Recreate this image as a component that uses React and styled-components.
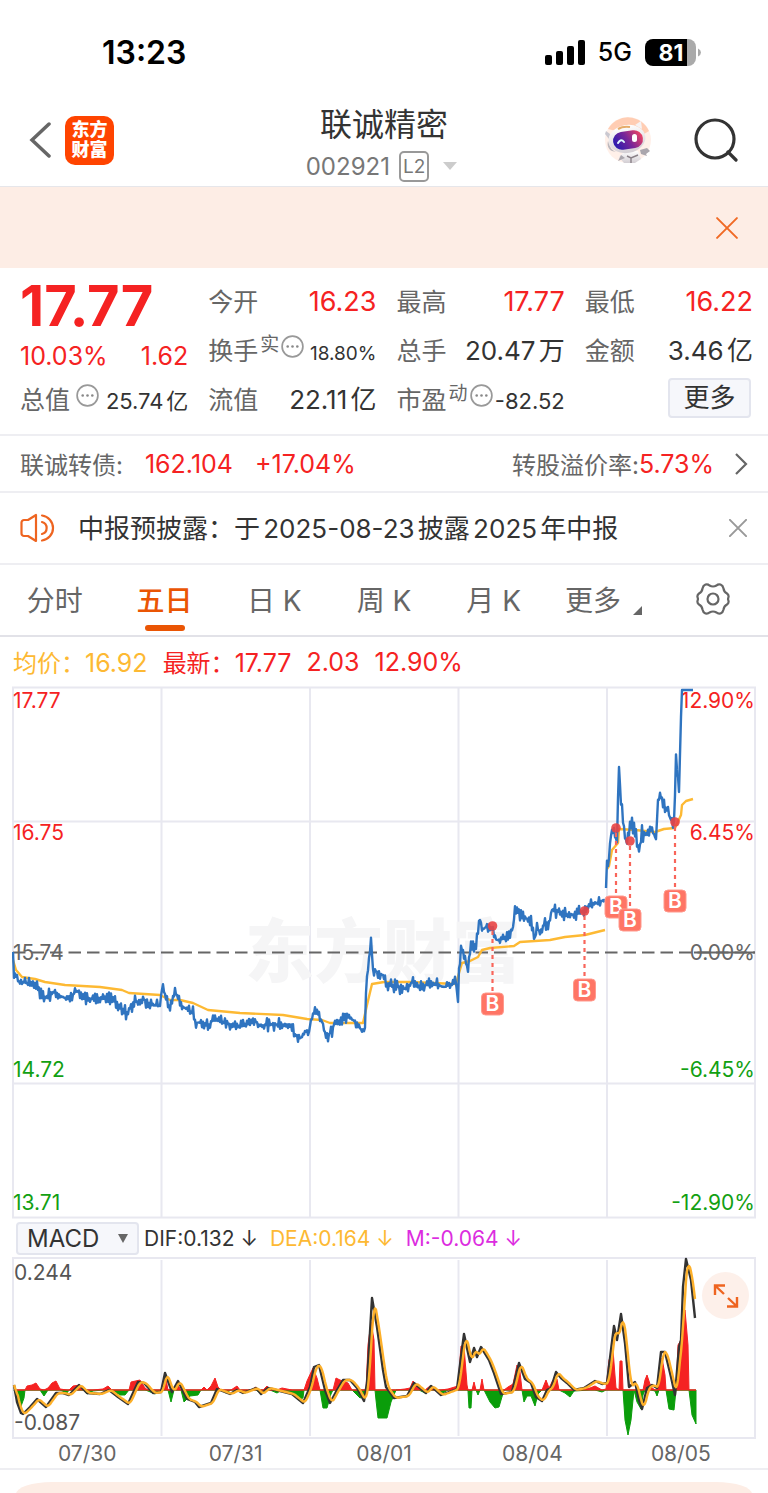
import React from 'react';
import styled, { createGlobalStyle } from 'styled-components'

const GlobalStyle = createGlobalStyle`
* { box-sizing: border-box; }
body {
margin: 0;
background: #fff;
color: #333;
font-family: Inter, "Noto Sans CJK SC", sans-serif;
text-autospace: normal;
}
button, select {
font: inherit;
color: inherit;
margin: 0;
padding: 0;
border: 0;
background: none;
}
h1, p, dl, dt, dd { margin: 0; font-weight: 400; }
svg { display: block; flex-shrink: 0; }
`

const Page = styled.main`
overflow: hidden;
`

const StatusBar = styled.div`
display: flex;
align-items: center;
justify-content: space-between;
height: 104px;
padding: 0 67px 0 102px;
color: #000;
`
const Clock = styled.span`
font-size: 32px;
font-weight: 600;
`
const StatusIcons = styled.div`
display: flex;
align-items: center;
gap: 13px;
font-size: 25px;
font-weight: 500;
`

const Header = styled.header`
display: grid;
grid-template-columns: 1fr auto 1fr;
height: 83px;
border-bottom: 1px solid #e6e6ea;
`
const HeaderSide = styled.div`
display: flex;
align-items: center;
justify-content: ${props => props.$end ? 'flex-end' : 'flex-start'};
gap: ${props => props.$end ? '42px' : '14px'};
padding: 0 30px 10px 29px;
`
const Logo = styled.a`
display: flex;
flex-direction: column;
justify-content: center;
width: 49px;
height: 49px;
border-radius: 10px;
background: #ff4400;
color: #fff;
font-size: 18px;
font-weight: 900;
line-height: 20px;
text-align: center;
text-decoration: none;
`
const Title = styled.h1`
font-size: 32px;
line-height: 42px;
text-align: center;
`
const Code = styled.button`
display: flex;
align-items: center;
justify-content: center;
gap: 9px;
width: 100%;
height: 40px;
color: #777;
font-size: 24px;
`
const Level = styled.span`
padding: 0 2px;
border: 2px solid #999;
border-radius: 5px;
font-size: 19px;
line-height: 27px;
`

const Banner = styled.div`
display: flex;
align-items: center;
justify-content: flex-end;
height: 81px;
padding: 0 30px;
background: #fdede5;
`

const Quote = styled.section`
display: grid;
grid-template-columns: repeat(4, 1fr);
column-gap: 20px;
padding: 10px 15px 9px 20px;
border-bottom: 2px solid #eeeef2;
`
const Column = styled.div`
display: flex;
flex-direction: column;
`
const Price = styled.p`
color: #f52222;
font-size: 56px;
font-weight: 700;
line-height: 56px;
`
const Change = styled.p`
display: flex;
align-items: center;
justify-content: space-between;
height: 44px;
margin-bottom: -2px;
color: #f52222;
font-size: 25px;
`
const Cell = styled.div`
display: flex;
align-items: baseline;
justify-content: space-between;
height: 49px;
line-height: 48px;
white-space: nowrap;
`
const Label = styled.dt`
display: flex;
color: #666;
font-size: 25px;
`
const Sup = styled.sup`
margin-left: 2px;
font-size: 19px;
line-height: 36px;
vertical-align: baseline;
`
const Dots = styled.svg`
margin: 8px 0 0 ${props => props.$gap}px;
`
const Value = styled.dd`
color: ${props => props.$up ? '#f52222' : '#333'};
font-size: ${props => props.$size || 26}px;
`
const MoreButton = styled.button`
align-self: flex-end;
width: 83px;
height: 40px;
margin: 2px 2px 0 0;
border: 2px solid #e3e5ee;
border-radius: 4px;
background: #f6f7fb;
font-size: 26px;
line-height: 36px;
`

const Bond = styled.a`
display: flex;
align-items: center;
height: 57px;
padding: 0 20px;
border-bottom: 2px solid #eeeef2;
color: #666;
font-size: 24px;
text-decoration: none;
white-space: nowrap;
`
const Red = styled.span`
color: #f52222;
font-size: 25px;
margin-left: ${props => props.$gap || 0}px;
`
const Premium = styled.span`
display: flex;
align-items: center;
margin-left: auto;
svg { margin-left: 20px; }
`

const Notice = styled.section`
display: flex;
align-items: center;
height: 72px;
padding: 0 21px 0 20px;
border-bottom: 2px solid #eeeef2;
`
const NoticeText = styled.p`
flex: 1;
margin-left: 22px;
padding-bottom: 4px;
font-size: 26px;
white-space: nowrap;
`

const Tabs = styled.nav`
display: grid;
grid-template-columns: repeat(7, 1fr);
height: 72px;
border-bottom: 2px solid #e2e2e8;
`
const Tab = styled.button`
position: relative;
display: flex;
align-items: center;
justify-content: center;
padding-bottom: 2px;
color: ${props => props.$active ? '#ea5504' : '#666'};
font-size: 28px;
font-weight: ${props => props.$active ? 500 : 400};
white-space: nowrap;
`
const Underline = styled.span`
position: absolute;
bottom: 4px;
left: 50%;
width: 40px;
height: 6px;
margin-left: -20px;
border-radius: 3px;
background: #ea5504;
`
const Corner = styled.span`
align-self: flex-end;
margin: 0 0 18px 12px;
border-left: 9px solid transparent;
border-bottom: 9px solid #666;
`

const Legend = styled.div`
display: flex;
align-items: center;
gap: 15px;
height: 49px;
padding: 0 13px;
color: #f52222;
font-size: 25px;
white-space: nowrap;
`
const Average = styled.span`
color: #fdb933;
`
const Name = styled.span`
font-size: 24px;
`

const Plot = styled.div`
position: relative;
padding: 0 12px;
svg { width: 100%; height: auto; }
`
const Indicator = styled.div`
display: flex;
align-items: center;
gap: 12px;
height: 38px;
padding: 0 16px;
font-size: 21px;
white-space: nowrap;
`
const SelectBox = styled.label`
position: relative;
width: 123px;
margin-right: -7px;
svg { position: absolute; right: 11px; top: 11px; pointer-events: none; }
`
const Select = styled.select`
appearance: none;
width: 100%;
height: 33px;
padding: 0 9px;
border: 2px solid #e3e5ee;
border-radius: 4px;
background: #f6f7fb;
font-size: 24px;
`
const Reading = styled.span`
color: ${props => props.color};
`
const Expand = styled.button`
position: absolute;
top: 15px;
right: 19px;
display: flex;
align-items: center;
justify-content: center;
width: 47px;
height: 47px;
border-radius: 50%;
background: #fdf0ea;
svg { width: 26px; height: 26px; }
`
const Dates = styled.div`
display: grid;
grid-template-columns: repeat(5, 1fr);
padding: 0 13px;
border-bottom: 2px solid #eeeef2;
color: #666;
font-size: 21px;
line-height: 29px;
text-align: center;
`
const Sheet = styled.div`
height: 12px;
margin: 12px 16px 0;
border-radius: 36px 36px 0 0 / 12px 12px 0 0;
background: #fdede5;
`

// [x, y] pairs along the price line, one list per unbroken run
const price = [
  [13,952],[14,972],[17,976],[19,984],[23,982],[32,985],[38,987],[43,998],[48,996],[55,992],[62,997],[68,999],[77,991],[83,997],
  [97,1000],[108,998],[115,1002],[122,1008],[127,1014],[133,1003],[143,999],[152,1005],[160,1006],[162,988],[167,998],[170,1009],
  [173,996],[176,993],[182,1006],[193,1013],[195,1023],[202,1022],[208,1027],[214,1016],[220,1022],[230,1024],[240,1026],[255,1021],
  [260,1026],[273,1024],[293,1027],[295,1035],[301,1038],[305,1031],[309,1032],[312,1014],[317,1012],[322,1022],[326,1037],[332,1031],
  [335,1021],[340,1021],[347,1017],[355,1021],[362,1031],[365,1028],[366,990],[368,968],[371,938],[373,970],[383,975],[386,984],
  [392,985],[406,989],[412,982],[422,987],[431,983],[444,987],[456,983],[458,1002],[459,973],[461,947],[466,963],[468,970],[471,944],
  [476,946],[480,920],[482,930],[487,926],[492,928],[497,940],[509,938],[513,928],[515,908],[521,917],[531,920],[535,938],[537,927],
  [541,936],[544,925],[549,922],[552,910],[561,912],[569,915],[577,914],[584,910],[592,904],[599,903],[605,899]
]
const priceLast = [
  [606,888],[607,853],[608,866],[611,834],[614,832],[617,842],[619,767],[621,803],[624,830],[626,845],[632,820],[636,838],[639,850],
  [642,834],[647,835],[651,825],[656,840],[658,800],[660,796],[666,808],[671,820],[674,824],[676,758],[678,777]
]
// limit-up stretch, without swings
const limitUp = [[678,777],[679,792],[681,717],[682,690],[693,690]]
const average = [
  [13,960],[16,970],[22,977],[35,979],[45,982],[65,985],[100,987],[122,990],[129,993],[160,995],[170,1000],[180,1000],[193,1003],
  [208,1010],[240,1013],[283,1015],[307,1019],[322,1020],[330,1023],[363,1023],[367,1005],[372,984],[384,982],[410,982],[456,984],
  [459,973],[462,963],[470,961],[478,957],[482,950],[490,948],[514,946],[520,942],[550,940],[565,937],[585,935],[605,930]
]
const averageLast = [
  [607,869],[609,866],[612,850],[618,843],[619,829],[635,830],[655,832],[664,829],[675,828],[681,815],[682,805],[686,801],[693,799]
]
const buys = [[492.5,926,1004],[584.5,911,990],[616,828,907],[630,841,920],[675,822,901]]

const dif = [
  [14,1385],[17,1402],[21,1413],[23,1414],[30,1407],[37,1399],[46,1407],[56,1393],[63,1393],[69,1395],[79,1385],[87,1393],[100,1394],
  [109,1390],[118,1397],[128,1404],[138,1382],[144,1383],[153,1393],[161,1392],[165,1373],[172,1392],[178,1381],[187,1399],[195,1402],
  [199,1407],[211,1403],[217,1389],[230,1394],[237,1390],[243,1393],[256,1388],[261,1394],[268,1388],[292,1394],[303,1403],[310,1387],
  [314,1367],[319,1365],[325,1390],[330,1403],[337,1390],[343,1380],[350,1380],[357,1388],[364,1401],[367,1383],[372,1298],[377,1327],
  [383,1370],[386,1387],[394,1398],[407,1396],[414,1383],[426,1393],[431,1386],[441,1395],[457,1389],[461,1357],[464,1334],[470,1362],
  [474,1348],[477,1357],[481,1347],[489,1360],[494,1373],[501,1394],[512,1392],[519,1363],[525,1379],[531,1383],[536,1397],[542,1401],
  [547,1390],[551,1388],[556,1372],[561,1378],[567,1383],[574,1390],[584,1388],[595,1381],[602,1384],[607,1383],[611,1350],[614,1326],
  [617,1340],[621,1314],[625,1343],[629,1387],[635,1382],[639,1400],[642,1409],[647,1388],[652,1385],[657,1388],[661,1352],[665,1352],
  [671,1377],[675,1395],[679,1347],[681,1340],[683,1287],[686,1259],[691,1280],[695,1318]
]
const histogram = [
  [14,1390],[17,1398],[20,1409],[24,1398],[25,1390],[27,1386],[32,1385],[36,1383],[40,1389],[44,1396],[48,1388],[52,1383],[56,1381],
  [60,1389],[67,1393],[69,1390],[73,1386],[80,1385],[83,1390],[87,1394],[93,1391],[103,1389],[108,1386],[112,1390],[120,1395],[125,1395],
  [129,1390],[131,1382],[140,1380],[145,1388],[148,1391],[155,1394],[161,1390],[165,1374],[168,1390],[171,1402],[174,1390],[177,1384],
  [181,1390],[184,1402],[190,1396],[198,1395],[201,1390],[204,1387],[207,1390],[211,1386],[215,1378],[218,1387],[221,1390],[226,1393],
  [231,1390],[237,1386],[240,1390],[245,1393],[251,1390],[256,1387],[259,1392],[263,1391],[267,1386],[270,1390],[277,1393],[282,1388],
  [292,1393],[298,1400],[303,1398],[304,1390],[307,1381],[313,1368],[317,1378],[320,1390],[323,1408],[327,1408],[331,1394],[333,1390],
  [336,1378],[340,1380],[348,1383],[352,1390],[360,1398],[365,1396],[366,1390],[368,1345],[371,1322],[374,1340],[375,1390],[376,1400],
  [378,1418],[387,1418],[391,1402],[396,1390],[405,1389],[410,1388],[413,1381],[419,1388],[425,1393],[430,1386],[436,1390],[441,1394],
  [448,1389],[458,1386],[461,1346],[464,1346],[467,1385],[468,1391],[469,1408],[471,1408],[472,1390],[474,1382],[476,1390],[478,1395],
  [480,1390],[482,1379],[484,1390],[490,1402],[495,1408],[499,1407],[504,1390],[508,1387],[513,1384],[517,1365],[520,1372],[522,1390],
  [524,1402],[527,1396],[531,1396],[535,1406],[538,1394],[542,1390],[546,1380],[549,1388],[553,1380],[557,1379],[559,1390],[565,1393],
  [570,1397],[574,1391],[590,1388],[595,1386],[602,1392],[606,1389],[609,1360],[613,1350],[616,1388],[619,1390],[620,1361],[622,1361],
  [623,1390],[625,1420],[628,1435],[631,1420],[634,1390],[637,1402],[641,1409],[643,1395],[645,1380],[647,1375],[651,1387],[655,1391],
  [657,1396],[659,1385],[662,1358],[665,1375],[666,1390],[669,1409],[674,1410],[676,1390],[678,1345],[681,1340],[685,1310],[688,1345],
  [689,1390],[692,1415],[696,1424]
]

const BASE = 1390

const join = (points) => points.map(p => p.join(',')).join(' ')

// one point per pixel between the given ones
const fill = (points) => {
  const out = []
  points.forEach(([x, y], i) => {
    out.push([x, y])
    const next = points[i + 1]
    if (!next) return
    for (let n = x + 1; n < next[0]; n++) {
      out.push([n, y + (next[1] - y) * (n - x) / (next[0] - x)])
    }
  })
  return out
}

// minute ticks: mostly small swings round the trend, now and then a spike
const ticks = (points, size) => fill(points).map(([x, y], i, all) => {
  const swing = Math.abs(Math.sin(i * 12.9898) * 43758.5453) % 1
  const side = i % 2 ? 1 : -1
  const edge = i === 0 || i === all.length - 1
  return [x, (y + (edge ? 0 : side * swing * swing * size)).toFixed(1)]
})

const trailing = (points, span) => {
  const all = fill(points)
  return all.map(([x], i) => {
    const part = all.slice(Math.max(0, i - span + 1), i + 1)
    return [x, (part.reduce((sum, p) => sum + p[1], 0) / part.length).toFixed(1)]
  })
}

const area = (points, clip) => join([[14, BASE], ...points.map(([x, y]) => [x, clip(y, BASE)]), [696, BASE]])

const scale = [
  ['17.77', '12.90%', 708, '#f52222'],
  ['16.75', '6.45%', 840, '#f52222'],
  ['15.74', '0.00%', 960, '#666'],
  ['14.72', '-6.45%', 1077, '#12a012'],
  ['13.71', '-12.90%', 1210, '#12a012']
]
const dayLines = [161.5, 310, 458.5, 607]

const Cross = ({ size, color, width }) => (
  <svg width={size} height={size} viewBox="0 0 20 20" fill="none" stroke={color} strokeWidth={width} strokeLinecap="round">
    <path d="M1 1l18 18M19 1L1 19" />
  </svg>
)

const Info = ({ gap }) => (
  <Dots $gap={gap} width="23" height="23" viewBox="0 0 23 23">
    <circle cx="11.5" cy="11.5" r="10.4" fill="none" stroke="#999" strokeWidth="1.7" />
    <g fill="#888">
      <circle cx="6.7" cy="11.5" r="1.3" />
      <circle cx="11.5" cy="11.5" r="1.3" />
      <circle cx="16.3" cy="11.5" r="1.3" />
    </g>
  </Dots>
)

const Robot = () => (
  <svg width="48" height="48" viewBox="0 0 48 48">
    <defs>
      <linearGradient id="visor" x1="0" x2="1" y1="0.6" y2="0.3">
        <stop offset="0" stopColor="#2a1bb0" />
        <stop offset="0.5" stopColor="#7a2598" />
        <stop offset="1" stopColor="#f04462" />
      </linearGradient>
      <linearGradient id="shell" x1="0" x2="0" y1="0" y2="1">
        <stop offset="0" stopColor="#ffffff" />
        <stop offset="1" stopColor="#d3ced3" />
      </linearGradient>
    </defs>
    <circle cx="24" cy="24" r="23" fill="#fff0e9" />
    <path d="M4 13A23 23 0 0 1 45 15L40 18L8 14z" fill="#ffcdb3" />
    <path d="M31 9l6-4 1 8z" fill="#f6f3f4" />
    <path d="M2 15l4 3-1 5-4-5z" fill="#cac8d0" />
    <path d="M20 36l14-1 3 8-6 4-11 0-5-6z" fill="url(#shell)" />
    <path d="M17 39l-3 6 7-3zM36 34l7-2 3 3-4 3 1 2-6-2z" fill="#aaa6ad" />
    <path d="M23 40l4 2 7-3M27 42v5" fill="none" stroke="#898087" strokeWidth="1.4" />
    <ellipse cx="23" cy="23" rx="18.5" ry="14" transform="rotate(-10 23 23)" fill="url(#shell)" />
    <path d="M4 25c2 7 4 9 8 11l-4-1c-4-2-5-6-4-10z" fill="#bcb8bd" />
    <path d="M14 13q5-3 12-2" fill="none" stroke="#e5ab69" strokeWidth="2.2" />
    <rect x="9" y="15" width="30" height="18" rx="9" transform="rotate(-8 24 24)" fill="url(#visor)" />
    <path d="M14 27q3-5 6-1" fill="none" stroke="#dffaff" strokeWidth="2" strokeLinecap="round" />
    <rect x="28" y="18" width="5" height="8" rx="2.5" fill="#fff" />
  </svg>
)

const Battery = () => (
  <svg width="56" height="27" viewBox="0 0 56 27">
    <path d="M8 0h34v27H8a8 8 0 0 1-8-8V8a8 8 0 0 1 8-8z" fill="#000" />
    <path d="M42 0h1a8 8 0 0 1 8 8v11a8 8 0 0 1-8 8h-1z" fill="#aaa" />
    <path d="M53 9.500q3 1.500 3 4t-3 4z" fill="#aaa" />
    <text x="26" y="22" textAnchor="middle" fontSize="23" fontWeight="700" fill="#fff">81</text>
  </svg>
)

const PriceChart = () => (
  <svg viewBox="12 686 744 533" fontSize="21" role="img" aria-label="五日走势">
    <g fill="none" stroke="#e8e8f0" strokeWidth="2">
      <rect x="13" y="687.500" width="742" height="530" />
      {dayLines.map(x => <path key={x} d={`M${x} 688V1217`} />)}
      <path d="M13 821.500H755M13 1083.500H755" />
    </g>
    <text x="245" y="977" fontSize="69" fontWeight="900" fill="#f5f5f6">东方财富</text>
    <path d="M13 952.500H755" stroke="#666" strokeWidth="2.200" strokeDasharray="12.500 6" />
    {scale.map(([left, right, y, color]) => (
      <g key={left} fill={color}>
        <text x="13" y={y}>{left}</text>
        <text x="755" y={y} textAnchor="end">{right}</text>
      </g>
    ))}
    <path d="M694 952.500H755" stroke="#666" strokeWidth="2" />
    <g fill="none" strokeWidth="2.400" strokeLinejoin="round">
      <polyline points={join(average)} stroke="#fdb933" />
      <polyline points={join(averageLast)} stroke="#fdb933" />
      <polyline points={join(ticks(price, 7))} stroke="#2f74c0" />
      <polyline points={join(ticks(priceLast, 9))} stroke="#2f74c0" />
      <polyline points={join(limitUp)} stroke="#2f74c0" />
    </g>
    {buys.map(([x, dot, box]) => (
      <g key={x}>
        <path d={`M${x} ${dot + 5}V${box - 12}`} stroke="#f8655a" strokeWidth="2.200" strokeDasharray="4 4" />
        <circle cx={x} cy={dot} r="4.800" fill="#e94444" opacity="0.9" />
        <rect x={x - 11} y={box - 11} width="22" height="22" rx="4" fill="#ff7565" stroke="#ff9a8e" />
        <text x={x} y={box + 7} textAnchor="middle" fontSize="21" fontWeight="600" fill="#fff">B</text>
      </g>
    ))}
  </svg>
)

const MacdChart = () => (
  <svg viewBox="12 1257 744 182" fontSize="21" role="img" aria-label="MACD">
    <g fill="none" stroke="#e8e8f0" strokeWidth="2">
      <rect x="13" y="1258" width="742" height="180" />
      {dayLines.map(x => <path key={x} d={`M${x} 1260V1436`} />)}
    </g>
    <polygon points={area(histogram, Math.max)} fill="#0a9d0a" stroke="#0a9d0a" />
    <polygon points={area(histogram, Math.min)} fill="#f52222" stroke="#f52222" />
    <g fill="none" strokeWidth="2.400" strokeLinejoin="round">
      <polyline points={join(dif)} stroke="#333" />
      <polyline points={join(trailing(dif, 5))} stroke="#fdb02a" />
    </g>
    <g fill="#555">
      <text x="14" y="1280">0.244</text>
      <text x="14" y="1430">-0.087</text>
    </g>
  </svg>
)

const columns = [
  [
    { label: '今开', value: '16.23', up: true, size: 27 },
    { label: '换手', sup: '实', info: true, value: '18.80%', size: 19 },
    { label: '流值', value: '22.11亿' }
  ],
  [
    { label: '最高', value: '17.77', up: true, size: 27 },
    { label: '总手', value: '20.47万' },
    { label: '市盈', sup: '动', info: true, value: '-82.52', size: 22 }
  ],
  [
    { label: '最低', value: '16.22', up: true, size: 27 },
    { label: '金额', value: '3.46亿' }
  ]
]
const tabs = ['分时', '五日', '日 K', '周 K', '月 K']

const QuoteCell = ({ item }) => (
  <Cell>
    <Label>
      {item.label}
      {item.sup && <Sup>{item.sup}</Sup>}
      {item.info && <Info gap={item.sup ? 2 : 6} />}
    </Label>
    <Value $up={item.up} $size={item.size}>{item.value}</Value>
  </Cell>
)

class App extends React.Component {

  state = { tab: '五日' }

  render() {

    const { tab } = this.state

    return (
      <Page>
        <GlobalStyle />
        <StatusBar>
          <Clock>13:23</Clock>
          <StatusIcons>
            <svg width="40" height="25" viewBox="0 0 40 25">
              <rect y="15" width="7" height="10" rx="2" />
              <rect x="11" y="11" width="7" height="14" rx="2" />
              <rect x="22" y="6" width="7" height="19" rx="2" />
              <rect x="33" width="7" height="25" rx="2" />
            </svg>
            5G
            <Battery />
          </StatusIcons>
        </StatusBar>

        <Header>
          <HeaderSide>
            <button aria-label="返回">
              <svg width="22" height="36" viewBox="0 0 22 36" fill="none" stroke="#666" strokeWidth="3.500" strokeLinecap="round">
                <path d="M20 2L3 18l17 16" />
              </svg>
            </button>
            <Logo href="#"><span>东方</span><span>财富</span></Logo>
          </HeaderSide>
          <div>
            <Title>联诚精密</Title>
            <Code>
              002921
              <Level>L2</Level>
              <svg width="24" height="8" viewBox="0 0 24 8"><path d="M5 0h14l-7 8z" fill="#ccc" /></svg>
            </Code>
          </div>
          <HeaderSide $end>
            <button aria-label="助手"><Robot /></button>
            <button aria-label="搜索">
              <svg width="44" height="44" viewBox="0 0 44 44" fill="none" stroke="#333" strokeWidth="3.200" strokeLinecap="round">
                <circle cx="21" cy="21" r="19" />
                <path d="M34 34l8 8" />
              </svg>
            </button>
          </HeaderSide>
        </Header>

        <Banner>
          <button aria-label="关闭横幅"><Cross size="22" color="#f06a25" width="1.800" /></button>
        </Banner>

        <Quote>
          <Column>
            <Price>17.77</Price>
            <Change><span>10.03%</span><span>1.62</span></Change>
            <dl><QuoteCell item={{ label: '总值', info: true, value: '25.74亿', size: 22 }} /></dl>
          </Column>
          {columns.map((items, i) => (
            <Column key={i}>
              <dl>{items.map(item => <QuoteCell key={item.label} item={item} />)}</dl>
              {i === 2 && <MoreButton>更多</MoreButton>}
            </Column>
          ))}
        </Quote>

        <Bond href="#">
          联诚转债:
          <Red $gap={22}>162.104</Red>
          <Red $gap={22}>+17.04%</Red>
          <Premium>
            转股溢价率:<Red>5.73%</Red>
            <svg width="14" height="22" viewBox="0 0 14 22" fill="none" stroke="#666" strokeWidth="2.200">
              <path d="M2 1l10 10L2 21" />
            </svg>
          </Premium>
        </Bond>

        <Notice>
          <svg width="36" height="30" viewBox="0 0 36 30" fill="none" stroke="#ee6420" strokeWidth="2.200" strokeLinecap="round" strokeLinejoin="round">
            <path d="M16 2v26l-8-5H4a2.500 2.500 0 0 1-2.500-2.500v-11A2.500 2.500 0 0 1 4 7h4z" />
            <path d="M22 2.500a12.600 12.600 0 0 1 0 25M22 9a6.200 6.200 0 0 1 0 12" />
          </svg>
          <NoticeText>中报预披露：于2025-08-23披露2025年中报</NoticeText>
          <button aria-label="关闭公告"><Cross size="18" color="#999" width="2.200" /></button>
        </Notice>

        <Tabs>
          {tabs.map(name => (
            <Tab key={name} $active={name === tab} onClick={() => this.setState({ tab: name })}>
              {name}
              {name === tab && <Underline />}
            </Tab>
          ))}
          <Tab>更多<Corner /></Tab>
          <Tab aria-label="设置">
            <svg width="34" height="32" viewBox="0 0 34 32" fill="none" stroke="#666" strokeWidth="2.200" strokeLinejoin="round">
              <path d="M9.500 1.500Q12 1 13.500 2.500Q17 4.500 20.500 2.500Q22 1 24.500 1.500Q27 2.500 27.500 5.500Q28 9 31 10.500Q33 12 32.500 14L32 16L32.500 18Q33 20 31 21.500Q28 23 27.500 26.500Q27 29.500 24.500 30.500Q22 31 20.500 29.500Q17 27.500 13.500 29.500Q12 31 9.500 30.500Q7 29.500 6.500 26.500Q6 23 3 21.500Q1 20 1.500 18L2 16L1.500 14Q1 12 3 10.500Q6 9 6.500 5.500Q7 2.500 9.500 1.500z" />
              <circle cx="17" cy="16" r="5.500" />
            </svg>
          </Tab>
        </Tabs>

        <Legend>
          <Average><Name>均价：</Name>16.92</Average>
          <span><Name>最新：</Name>17.77</span>
          <span>2.03</span>
          <span>12.90%</span>
        </Legend>
        <Plot><PriceChart /></Plot>
        <Indicator>
          <SelectBox>
            <Select aria-label="指标" defaultValue="MACD">
              <option>MACD</option>
              <option>KDJ</option>
              <option>RSI</option>
            </Select>
            <svg width="10" height="10" viewBox="0 0 10 10"><path d="M0 1h10L5 10z" fill="#666" /></svg>
          </SelectBox>
          <Reading color="#333">DIF:0.132 ↓</Reading>
          <Reading color="#fdb933">DEA:0.164 ↓</Reading>
          <Reading color="#dc2ce0">M:-0.064 ↓</Reading>
        </Indicator>
        <Plot>
          <MacdChart />
          <Expand aria-label="全屏">
            <svg viewBox="0 0 26 26" fill="none" stroke="#ee6420" strokeWidth="2.400">
              <path d="M2 12V2.500h10M2 2.500l9 8.500M24 14v9.500H14M24 23.500l-9-8.500" />
            </svg>
          </Expand>
        </Plot>
        <Dates>
          <span>07/30</span>
          <span>07/31</span>
          <span>08/01</span>
          <span>08/04</span>
          <span>08/05</span>
        </Dates>
        <Sheet />
      </Page>
    )

  }
}

export default App
